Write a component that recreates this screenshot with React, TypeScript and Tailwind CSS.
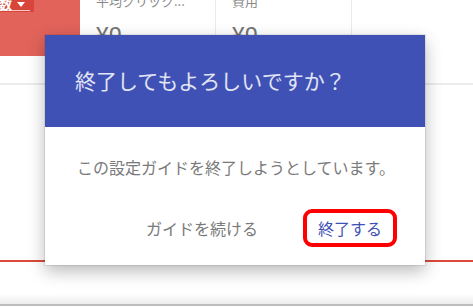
export default function App() {
  return (
    <div
      className="relative w-[473px] h-[307px] overflow-hidden bg-white"
      style={{ fontFamily: '"Noto Sans CJK JP", "Noto Sans", Roboto, sans-serif' }}
    >
      {/* BACKGROUND PAGE */}
      <div className="flex flex-col">
        <div className="flex h-[56px]">
          <div className="w-[80px] bg-[#e1635a]">
            <div className="flex h-[12px] w-[34px] items-center justify-end gap-[5px] bg-[#d8463b] pr-[9px]">
              <span className="-mt-[4px] text-[13px] font-bold leading-[14px] text-white">数</span>
              <span className="-mt-[4px] block h-0 w-0 border-x-[4px] border-t-[5px] border-x-transparent border-t-white" />
            </div>
            <div className="-mt-[2px] h-px w-[30px] bg-white/70" />
          </div>
          <div className="w-[136px] border-r border-[#ebebeb] pl-4">
            <div className="-mt-[7px] whitespace-nowrap text-[13px] leading-[16px] text-[#8a8a8a]">平均クリック...</div>
            <div className="mt-[14px] text-[24px] leading-[26px] text-[#767676]" style={{ fontFamily: 'Roboto, sans-serif' }}>¥0</div>
          </div>
          <div className="w-[136px] border-r border-[#ebebeb] pl-4">
            <div className="-mt-[7px] text-[13px] leading-[16px] text-[#8a8a8a]">費用</div>
            <div className="mt-[14px] text-[24px] leading-[26px] text-[#767676]" style={{ fontFamily: 'Roboto, sans-serif' }}>¥0</div>
          </div>
        </div>
        <div className="h-[27px]" />
        <div className="h-[2px] bg-[#ececec]" />
        <div className="h-[175px]" />
        <div className="h-[2px] bg-[#dc4a3b]" />
        <div className="h-[32px]" />
        <div className="h-[10px] bg-gradient-to-b from-white to-[#ececec]" />
        <div className="h-[2px] bg-[#bdbdbd]" />
      </div>

      {/* DIALOG */}
      <div className="absolute left-[45px] top-[35px] flex h-[230px] w-[380px] flex-col bg-white shadow-[0_0_0_1px_rgba(0,0,0,0.08),0_6px_16px_rgba(0,0,0,0.28)]">
        <div className="flex h-[92px] items-center bg-[#3f51b5] px-[30px]">
          <h2 className="text-[21px] font-normal text-white/85">終了してもよろしいですか？</h2>
        </div>
        <p className="whitespace-nowrap pl-[32px] pt-[28px] text-[16px] leading-[24px] text-[#7a7a7a]">
          この設定ガイドを終了しようとしています。
        </p>
        <div className="mt-[30px] flex justify-end gap-[30px] pr-[28px]">
          <button className="h-[38px] px-[15px] text-[16px] text-[#7a7a7a]">ガイドを続ける</button>
          <button className="relative h-[38px] px-[15px] text-[16px] text-[#3f51b5]">
            終了する
            <span className="absolute inset-0 rounded-[9px] border-[4px] border-[#ff0000]" />
          </button>
        </div>
      </div>
    </div>
  );
}
